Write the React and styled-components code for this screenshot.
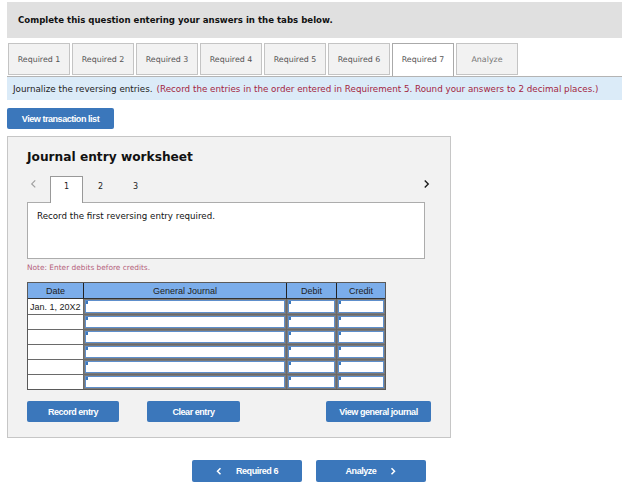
import React from "react";
import styled, { createGlobalStyle } from "styled-components";

const GlobalStyle = createGlobalStyle`
  body {
    margin: 0;
    background: #ffffff;
    font-family: "DejaVu Sans", Verdana, sans-serif;
    color: #222;
  }
`;

const Page = styled.div`
  width: 615px;
  padding: 2px 0 0 7px;
`;

const Header = styled.div`
  height: 36px;
  background: #e0e0e0;
  display: flex;
  align-items: center;
  padding-left: 11px;
  font-size: 8.6px;
  font-weight: bold;
  color: #111;
`;

const TabRow = styled.div`
  display: flex;
  gap: 2px;
  margin-top: 5px;
  padding-left: 1px;
  height: 33px;
  border-bottom: 1px solid #b4b4b4;
`;

const Tab = styled.div`
  width: 62px;
  height: ${(p) => (p.$active ? "33px" : "32px")};
  box-sizing: border-box;
  border: 1px solid #c4c4c4;
  border-bottom: ${(p) => (p.$active ? "none" : "1px solid #c4c4c4")};
  background: ${(p) => (p.$active ? "#ffffff" : "#f2f2f2")};
  border-color: ${(p) => (p.$active ? "#aaaaaa" : "#c4c4c4")};
  display: flex;
  align-items: center;
  justify-content: center;
  padding-bottom: ${(p) => (p.$active ? "1px" : "0")};
  font-size: 7.9px;
  color: ${(p) => (p.$dim ? "#777" : "#555")};
  position: relative;
  z-index: ${(p) => (p.$active ? 1 : 0)};
`;

const InfoBar = styled.div`
  height: 23px;
  background: #dbebf8;
  display: flex;
  align-items: center;
  padding-left: 6px;
  font-size: 8.75px;
  color: #222;
  white-space: nowrap;
`;

const Red = styled.span`
  color: #a3263f;
  margin-left: 4px;
`;

const Button = styled.button`
  width: ${(p) => p.$w}px;
  height: ${(p) => p.$h || 21}px;
  border: none;
  border-radius: 2px;
  background: #3b77bb;
  color: #ffffff;
  font-family: "Liberation Sans", Arial, sans-serif;
  font-weight: bold;
  font-size: 9px;
  letter-spacing: -0.45px;
  display: flex;
  align-items: center;
  justify-content: center;
  gap: 14px;
  padding: 0;
  cursor: pointer;
`;

const TransactionButton = styled(Button)`
  margin-top: 8px;
`;

const Panel = styled.div`
  margin-top: 7px;
  width: 444px;
  height: 302px;
  box-sizing: border-box;
  background: #f2f2f2;
  border: 1px solid #c6c6c6;
  padding: 12px 19px 0 19px;
`;

const Title = styled.h2`
  margin: 0;
  font-size: 12.2px;
  font-weight: bold;
  color: #111;
  height: 26px;
  line-height: 16px;
`;

const Pager = styled.div`
  display: flex;
  align-items: flex-end;
  height: 27px;
`;

const PrevArrow = styled.span`
  width: 23px;
  display: flex;
  align-items: center;
  height: 18px;
  align-self: flex-start;
  padding-left: 3px;
  box-sizing: border-box;
`;

const PageNum = styled.div`
  width: ${(p) => (p.$active ? "33px" : "35px")};
  height: 27px;
  box-sizing: border-box;
  border: ${(p) => (p.$active ? "1px solid #999" : "1px solid transparent")};
  border-bottom: none;
  background: ${(p) => (p.$active ? "#ffffff" : "transparent")};
  display: flex;
  align-items: flex-start;
  justify-content: center;
  padding-top: 5px;
  font-size: 8px;
  color: #222;
  margin-bottom: -1px;
  position: relative;
  z-index: 1;
`;

const NextArrow = styled.span`
  margin-left: auto;
  align-self: flex-start;
  height: 18px;
  display: flex;
  align-items: center;
  margin-right: 1px;
`;

const Prompt = styled.div`
  width: 398px;
  height: 57px;
  box-sizing: border-box;
  background: #ffffff;
  border: 1px solid #acacac;
  padding: 8px 9px;
  font-size: 8.7px;
  color: #111;
`;

const Note = styled.div`
  margin-top: 4px;
  font-size: 7.4px;
  color: #b4607a;
  height: 19px;
`;

const Table = styled.div`
  width: 359px;
  box-sizing: border-box;
  border: 1px solid #5a5a5a;
  display: grid;
  grid-template-columns: 55px 203px 50px 49px;
  font-family: "Liberation Sans", Arial, sans-serif;
  font-size: 9px;
`;

const HeadCell = styled.div`
  height: 15px;
  background: #7badea;
  display: flex;
  align-items: center;
  justify-content: center;
  color: #222;
  border-bottom: 1px solid #333;
  border-left: ${(p) => (p.$first ? "none" : "1px solid #222")};
`;

const DateCell = styled.div`
  height: 15px;
  box-sizing: border-box;
  background: #ffffff;
  border-top: ${(p) => (p.$first ? "none" : "1px solid #6a6a6a")};
  display: flex;
  align-items: center;
  padding-left: 2px;
  color: #222;
  white-space: nowrap;
  overflow: hidden;
`;

const InputCell = styled.div`
  height: 15px;
  box-sizing: border-box;
  border-left: 1px solid #6a6a6a;
  border-top: ${(p) => (p.$first ? "none" : "1px solid #6a6a6a")};
  padding: 1px;
  background: #7a7a7a;
`;

const Field = styled.div`
  height: 100%;
  box-sizing: border-box;
  background: #ffffff;
  border: 1px solid #5e8fcc;
  position: relative;
  &::before {
    content: "";
    position: absolute;
    left: 0;
    top: 0;
    width: 2px;
    height: 3px;
    background: #3b77bb;
  }
`;

const Actions = styled.div`
  display: flex;
  margin-top: 11px;
  gap: 28px;
`;

const Spacer = styled.div`
  flex: 1;
`;

const BottomNav = styled.div`
  display: flex;
  gap: 14px;
  margin-top: 22px;
  padding-left: 185px;
`;

const Chevron = ({ dir = "right", color = "#fff", size = 8, weight = 2 }) => (
  <svg width={size} height={size * 1.4} viewBox="0 0 8 11">
    <path
      d={dir === "right" ? "M2 1.5 L6 5.5 L2 9.5" : "M6 1.5 L2 5.5 L6 9.5"}
      fill="none"
      stroke={color}
      strokeWidth={weight}
    />
  </svg>
);

const tabs = [
  "Required 1",
  "Required 2",
  "Required 3",
  "Required 4",
  "Required 5",
  "Required 6",
  "Required 7",
  "Analyze",
];

const rows = ["Jan. 1, 20X2", "", "", "", "", ""];

export default function App() {
  return (
    <>
      <GlobalStyle />
      <Page>
        <Header>Complete this question entering your answers in the tabs below.</Header>
        <TabRow>
          {tabs.map((t) => (
            <Tab key={t} $active={t === "Required 7"} $dim={t === "Analyze"}>
              {t}
            </Tab>
          ))}
        </TabRow>
        <InfoBar>
          Journalize the reversing entries.
          <Red>
            (Record the entries in the order entered in Requirement 5. Round your answers to 2
            decimal places.)
          </Red>
        </InfoBar>
        <TransactionButton $w={107}>View transaction list</TransactionButton>
        <Panel>
          <Title>Journal entry worksheet</Title>
          <Pager>
            <PrevArrow>
              <Chevron dir="left" color="#a0a0a0" size={7} weight={1.4} />
            </PrevArrow>
            <PageNum $active>1</PageNum>
            <PageNum>2</PageNum>
            <PageNum>3</PageNum>
            <NextArrow>
              <Chevron dir="right" color="#1a1a1a" size={7} weight={1.6} />
            </NextArrow>
          </Pager>
          <Prompt>Record the first reversing entry required.</Prompt>
          <Note>Note: Enter debits before credits.</Note>
          <Table>
            <HeadCell $first>Date</HeadCell>
            <HeadCell>General Journal</HeadCell>
            <HeadCell>Debit</HeadCell>
            <HeadCell>Credit</HeadCell>
            {rows.map((d, i) => (
              <React.Fragment key={i}>
                <DateCell $first={i === 0}>{d}</DateCell>
                <InputCell $first={i === 0}>
                  <Field />
                </InputCell>
                <InputCell $first={i === 0}>
                  <Field />
                </InputCell>
                <InputCell $first={i === 0}>
                  <Field />
                </InputCell>
              </React.Fragment>
            ))}
          </Table>
          <Actions>
            <Button $w={92}>Record entry</Button>
            <Button $w={93}>Clear entry</Button>
            <Spacer />
            <Button $w={105}>View general journal</Button>
          </Actions>
        </Panel>
        <BottomNav>
          <Button $w={110} $h={22}>
            <Chevron dir="left" size={6} weight={2} />
            Required 6
          </Button>
          <Button $w={110} $h={22}>
            Analyze
            <Chevron dir="right" size={6} weight={2} />
          </Button>
        </BottomNav>
      </Page>
    </>
  );
}
